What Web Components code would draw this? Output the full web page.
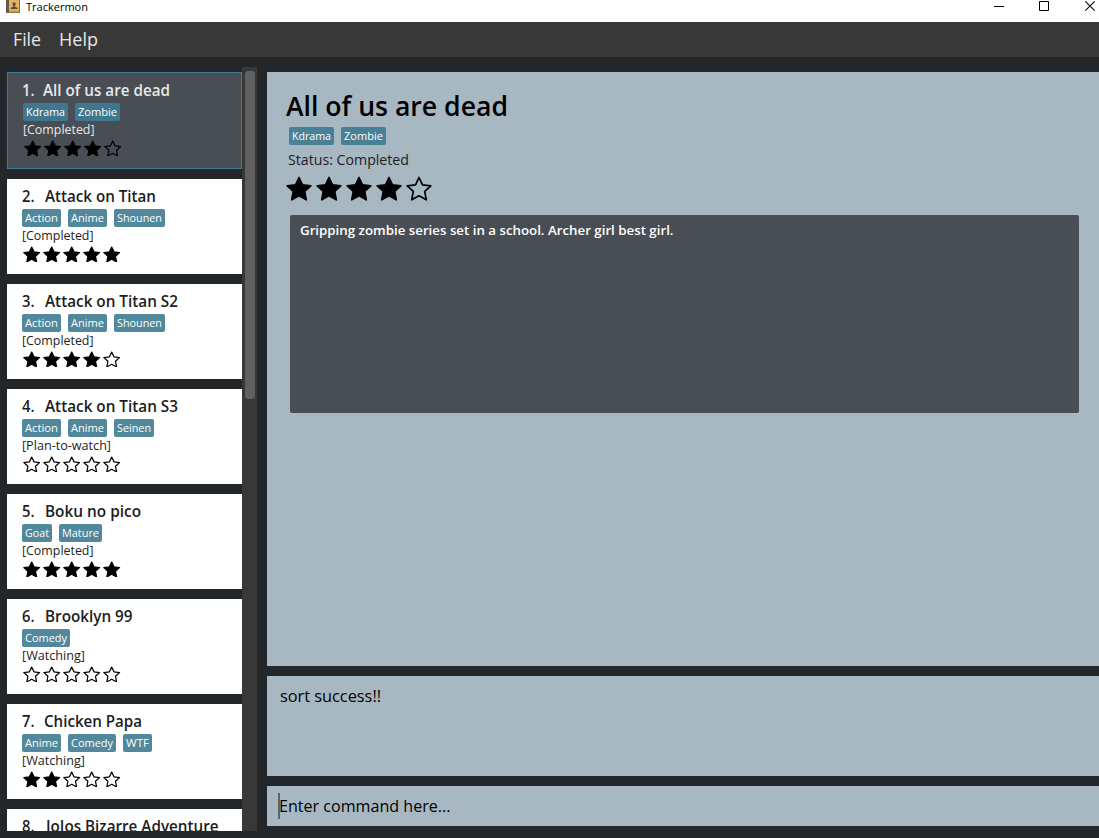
<!DOCTYPE html>
<html lang="en">
<head>
<meta charset="utf-8">
<title>Trackermon</title>
<style>
html,body{margin:0;height:100%;overflow:hidden;background:#23272a;font-family:"Open Sans","Noto Sans",sans-serif}
</style>
</head>
<body>
<tracker-app></tracker-app>
<script>
function define(name, render, connected) {
  customElements.define(name, class extends HTMLElement {
    connectedCallback() {
      if (!this.shadowRoot) this.attachShadow({mode: 'open'});
      this.shadowRoot.innerHTML = render(this);
      if (connected) connected(this);
    }
  });
}

// A single line of text condensed or stretched to a given width.
define('fit-text', el => `<style>
:host{display:block;flex:none;width:${el.getAttribute('w')}px;white-space:pre}
span{display:inline-block;transform-origin:0 50%}
</style><span><slot></slot></span>`, el => {
  const s = el.shadowRoot.querySelector('span');
  const n = s.getBoundingClientRect().width;
  if (n) s.style.transform = `scaleX(${el.getAttribute('w') / n})`;
});

const TAGS = {Kdrama:45,Zombie:45,Action:39,Anime:39,Shounen:51,Seinen:40,Goat:30,Mature:43,Comedy:48,WTF:29};
define('tag-list', el => `<style>
:host{display:flex;gap:7px;height:18px}
.t{box-sizing:border-box;padding:0 3px;height:18px;border-radius:2px;background:var(--tag,#52889b);color:#fff;font-size:11px;line-height:18px}
</style>${el.getAttribute('tags').split(',').map(t => `<div class="t"><fit-text w="${TAGS[t]-6}">${t}</fit-text></div>`).join('')}`);

define('star-rating', el => {
  const v = +el.getAttribute('value'), s = +el.getAttribute('size'), g = +el.getAttribute('gap');
  const star = i => `<svg viewBox="0 0 26 25" width="${s}" height="${s*25/26}"><path d="M13 1.5 L16.5 8.8 L24.8 9.8 L18.7 15.4 L20.3 23.8 L13 19.8 L5.7 23.8 L7.3 15.4 L1.2 9.8 L9.5 8.8 Z" fill="${i < v ? '#000' : 'none'}" stroke="#000" stroke-width="${s > 20 ? 1.7 : 1.8}" stroke-linejoin="round"/></svg>`;
  return `<style>:host{display:flex;gap:${g}px}svg{display:block;flex:none}</style>${[0,1,2,3,4].map(star).join('')}`;
});

define('show-card', el => {
  const a = n => el.getAttribute(n);
  return `<style>
:host{display:block;box-sizing:border-box;flex:none;height:95px;padding:6px 0 0 15px;background:#fff;color:#1d1d1d}
:host([selected]){height:97px;background:#494d54;border:1px solid #3e7b91;color:#e8e8e8;--tag:#3f778f}
.h{display:flex;font-size:15.5px;font-weight:600;line-height:22px;height:24px}
:host([selected]) .h{margin-left:-.7px}
.h .n{width:${a('nx')}px}
.s{font-size:12.5px;line-height:18px;height:18.6px}
star-rating{margin-left:1.2px}
</style>
<div class="h"><div class="n"><fit-text w="12.5">${a('num')}.</fit-text></div><fit-text w="${a('tw')}">${a('name')}</fit-text></div>
${a('tags') ? `<tag-list tags="${a('tags')}"></tag-list>
<div class="s"><fit-text w="${a('sw')}">[${a('status')}]</fit-text></div>
<star-rating value="${a('stars')}" size="17.4" gap="2.6"></star-rating>` : ''}`;
});

define('title-bar', () => `<style>
:host{display:flex;height:22px;background:#fff;color:#000;flex:none}
.i{margin-left:6px;width:15px;height:14px}
.t{margin:-2px 0 0 5px;font-size:11.5px;line-height:18px;flex:1}
.b{flex:none;margin-top:0}
svg{display:block}
</style>
<svg class="i" viewBox="0 0 15 14"><path d="M1 0h12.5v12.5H1z" fill="#dfb566"/><path d="M0 0h3v13H0z" fill="#6b5847"/><path d="M3 10.5h10.5V13H3z" fill="#cf9a4a"/><path d="M13 0h1v13H1v-.8h12z" fill="#8b6a40"/><path d="M6.7 2.5h2.8v2.4l-.7.8v1.1l2.7.9v1.4H4.7V7.7l2.7-.9V5.7l-.7-.8z" fill="#5c4933"/></svg>
<div class="t"><fit-text w="62">Trackermon</fit-text></div>
<svg class="b" width="107" height="14" viewBox="0 0 107 14" fill="none" stroke="#000"><path d="M2 6.5h10M47.5 1.5h9v9h-9z"/><path d="M93.3 1.3l9.4 9.4M102.7 1.3l-9.4 9.4" stroke-width="1.1"/></svg>`);

define('menu-bar', () => `<style>
:host{display:flex;flex:none;height:35px;background:#383838;color:#e6e6e6;font-size:18.5px;line-height:34px;padding-left:13px;gap:18px}
</style><fit-text w="28">File</fit-text><fit-text w="39">Help</fit-text>`);

const SHOWS = [
 [1,'All of us are dead',127,20.5,'Kdrama,Zombie','Completed',71.5,4],
 [2,'Attack on Titan',111,23,'Action,Anime,Shounen','Completed',71.5,5],
 [3,'Attack on Titan S2',133,23,'Action,Anime,Shounen','Completed',71.5,4],
 [4,'Attack on Titan S3',133,23,'Action,Anime,Seinen','Plan-to-watch',89,0],
 [5,'Boku no pico',96,22.5,'Goat,Mature','Completed',71.5,5],
 [6,'Brooklyn 99',87.5,22.5,'Comedy','Watching',63,0],
 [7,'Chicken Papa',98,22,'Anime,Comedy,WTF','Watching',63,2],
 [8,'JoJos Bizarre Adventure',172.5,23.5,'','',0,0]];
define('show-list', () => `<style>
:host{display:flex;flex:none;width:250px;height:764px;margin-top:10px;overflow:hidden}
.l{width:235px;display:flex;flex-direction:column;gap:10px;padding-top:5px;box-sizing:border-box}
.b{width:15px;box-sizing:border-box;padding:4px 2px 0 3px;background:#383838}
.b div{height:328px;border-radius:3px;background:#606060}
</style><div class="l">${SHOWS.map((s,i) => `<show-card ${i?'':'selected'} num="${s[0]}" name="${s[1]}" tw="${s[2]}" nx="${s[3]}" tags="${s[4]}" status="${s[5]}" sw="${s[6]}" stars="${s[7]}"></show-card>`).join('')}</div><div class="b"><div></div></div>`);

define('show-details', () => `<style>
:host{display:block;box-sizing:border-box;height:594px;background:#a8b8c2;padding:16px 20px 0 19px;color:#000}
.h{font-size:27px;font-weight:600;line-height:36px;height:39px;margin-left:-.2px}
tag-list{margin-left:3px;--tag:#488096}
.s{margin-left:2px;font-size:14px;line-height:20px;height:31.3px;padding-top:5px;box-sizing:border-box;color:#1b2024}
star-rating{height:26px}
.r{box-sizing:border-box;height:198px;margin:12.7px 0 0 4px;padding:6px 10px;border-radius:2px;background:#494d54;color:#fff;font-size:13px;font-weight:600;line-height:18px}
</style>
<div class="h"><fit-text w="222">All of us are dead</fit-text></div>
<tag-list tags="Kdrama,Zombie"></tag-list>
<div class="s"><fit-text w="121">Status: Completed</fit-text></div>
<star-rating value="4" size="26" gap="4"></star-rating>
<div class="r"><fit-text w="373.5">Gripping zombie series set in a school. Archer girl best girl.</fit-text></div>`);

define('result-box', () => `<style>
:host{display:block;box-sizing:border-box;height:100px;background:#a8b8c2;padding:8px 13px;color:#000;font-size:16px;line-height:24px}
</style><fit-text w="101">sort success!!</fit-text>`);

define('command-box', () => `<style>
:host{display:flex;box-sizing:border-box;height:40px;background:#a8b8c2;padding:7px 0 0 11px;color:#000;font-size:16px;line-height:26px}
i{width:2px;height:26px;background:#5c656b;margin-right:-1px}
</style><i></i><fit-text w="171.5">Enter command here...</fit-text>`);

define('tracker-app', () => `<style>
:host{display:flex;flex-direction:column;height:838px;overflow:hidden;background:#23272a}
.m{display:flex;gap:10px;flex:1;min-height:0;padding-left:7px}
.r{display:flex;flex-direction:column;gap:10px;flex:1;padding-top:15px}
.r>*{flex:none}
</style><title-bar></title-bar><menu-bar></menu-bar>
<div class="m"><show-list></show-list><div class="r"><show-details></show-details><result-box></result-box><command-box></command-box></div></div>`);
</script>
</body>
</html>
